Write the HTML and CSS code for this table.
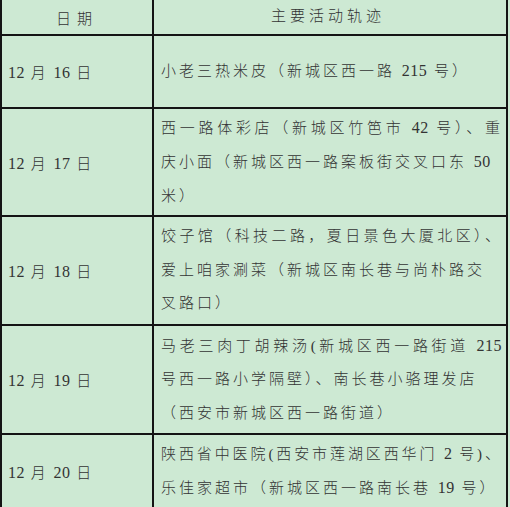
FILE: index.html
```html
<!DOCTYPE html>
<html lang="zh-CN">
<head>
<meta charset="utf-8">
<title>活动轨迹</title>
<link rel="stylesheet" href="styles.css">
</head>
<body>
<div class="sheet">
  <div class="cell head date">日期</div>
  <div class="cell head place">主要活动轨迹</div>

  <div class="cell date r1"><span class="ln"><span class="n">12</span> 月 <span class="n">16</span> 日</span></div>
  <div class="cell place r1"><span class="ln">小老三热米皮（新城区西一路 <span class="n">215</span> 号）</span></div>

  <div class="cell date r2"><span class="ln"><span class="n">12</span> 月 <span class="n">17</span> 日</span></div>
  <div class="cell place r2"><span class="ln full">西一路体彩店（新城区竹笆市 <span class="n">42</span> 号）、重</span><span class="ln">庆小面（新城区西一路案板街交叉口东 <span class="n">50</span></span><span class="ln">米）</span></div>

  <div class="cell date r3"><span class="ln"><span class="n">12</span> 月 <span class="n">18</span> 日</span></div>
  <div class="cell place r3"><span class="ln full">饺子馆（科技二路，夏日景色大厦北区）、</span><span class="ln">爱上咱家涮菜（新城区南长巷与尚朴路交</span><span class="ln">叉路口）</span></div>

  <div class="cell date r4"><span class="ln"><span class="n">12</span> 月 <span class="n">19</span> 日</span></div>
  <div class="cell place r4"><span class="ln full">马老三肉丁胡辣汤(新城区西一路街道 <span class="n">215</span></span><span class="ln">号西一路小学隔壁）、南长巷小骆理发店</span><span class="ln">（西安市新城区西一路街道）</span></div>

  <div class="cell date r5"><span class="ln"><span class="n">12</span> 月 <span class="n">20</span> 日</span></div>
  <div class="cell place r5"><span class="ln full">陕西省中医院(西安市莲湖区西华门 <span class="n">2</span> 号)、</span><span class="ln">乐佳家超市（新城区西一路南长巷 <span class="n">19</span> 号）</span></div>
</div>
</body>
</html>
```
FILE: styles.css
```css
html, body {
  margin: 0;
  padding: 0;
  background: #cde9d3;
}

body {
  font-family: "Liberation Serif", "Noto Sans CJK SC", serif;
  font-size: 15px;
  font-weight: 300;
  color: #333333;
  overflow: hidden;
}

.sheet {
  width: 508px;
  box-sizing: border-box;
  border-left: 2px solid #141414;
  border-right: 2px solid #141414;
  display: grid;
  grid-template-columns: 152px 1fr;
}

.cell {
  box-sizing: border-box;
  border-bottom: 2px solid #141414;
  display: flex;
  flex-direction: column;
  justify-content: center;
}

.date {
  border-right: 2px solid #141414;
  padding-left: 6px;
  letter-spacing: 2px;
}

.place {
  padding-left: 7px;
  padding-right: 4px;
  letter-spacing: 3px;
  line-height: 33.5px;
}

.head {
  height: 36px;
  align-items: center;
  padding-left: 0;
  letter-spacing: 6px;
}

.head.place {
  letter-spacing: 4px;
}

.r1 { height: 73px; }
.r2 { height: 108px; }
.r3 { height: 109px; }
.r4 { height: 109px; }
.r5 { height: 74px; }

.ln {
  display: block;
  white-space: nowrap;
}

.ln.full {
  text-align: justify;
  text-align-last: justify;
  letter-spacing: 2px;
}

.n {
  letter-spacing: 0.5px;
  font-size: 16px;
}
```
